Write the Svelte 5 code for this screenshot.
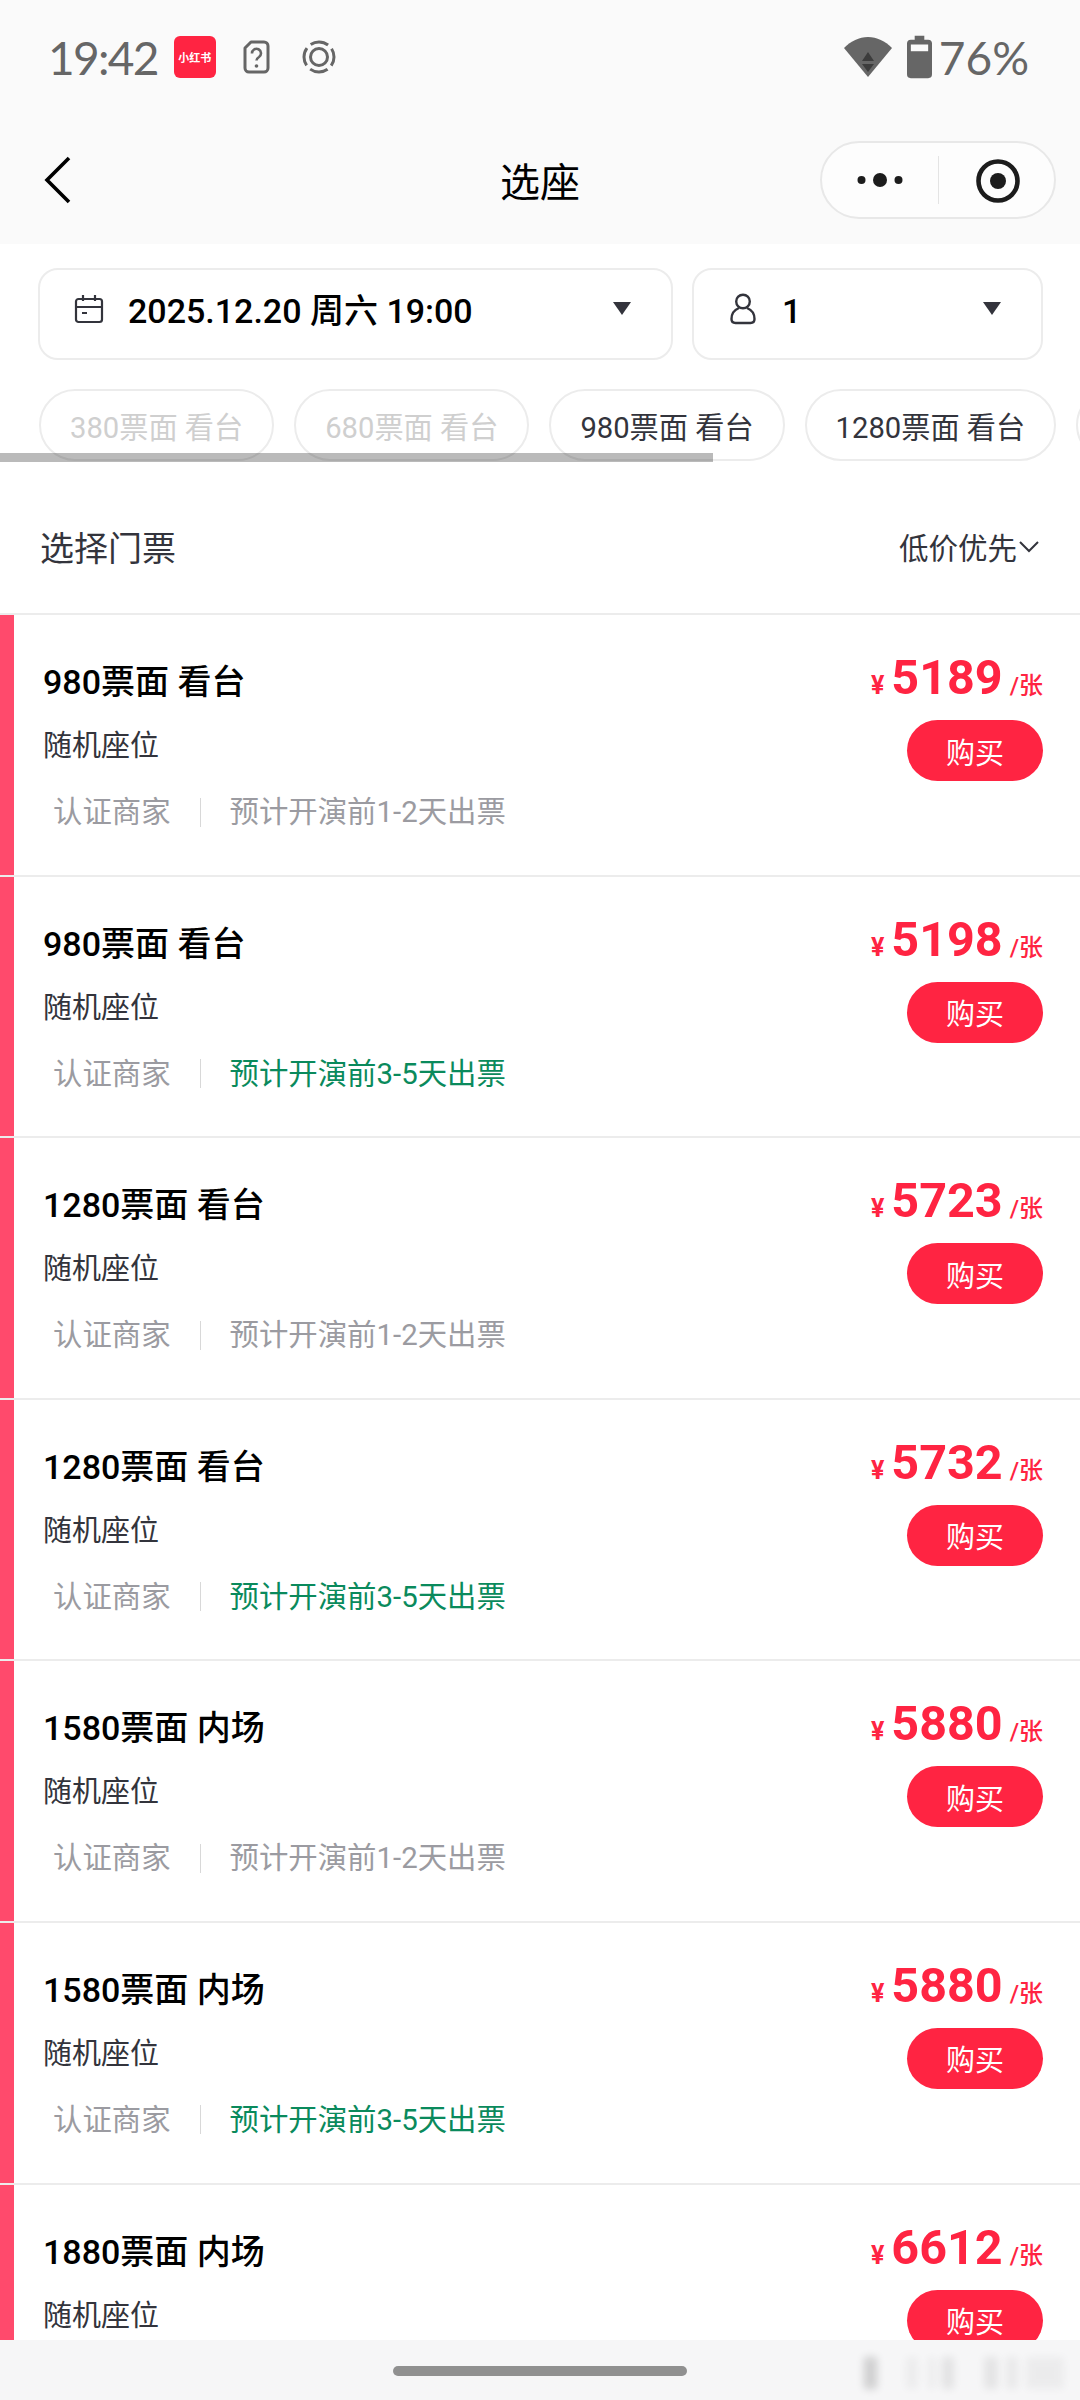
<script>
  const tickets = [
    { name: '980票面 看台', price: 5189, eta: '预计开演前1-2天出票', fast: false },
    { name: '980票面 看台', price: 5198, eta: '预计开演前3-5天出票', fast: true },
    { name: '1280票面 看台', price: 5723, eta: '预计开演前1-2天出票', fast: false },
    { name: '1280票面 看台', price: 5732, eta: '预计开演前3-5天出票', fast: true },
    { name: '1580票面 内场', price: 5880, eta: '预计开演前1-2天出票', fast: false },
    { name: '1580票面 内场', price: 5880, eta: '预计开演前3-5天出票', fast: true },
    { name: '1880票面 内场', price: 6612, eta: '预计开演前1-2天出票', fast: false }
  ];

  // the last chip only peeks in at the right edge, its label is off screen
  const chips = [
    { label: '380票面 看台', off: true },
    { label: '680票面 看台', off: true },
    { label: '980票面 看台', off: false },
    { label: '1280票面 看台', off: false },
    { label: '', off: false }
  ];

  // blurred smudge over the bottom right corner of the home bar
  const smudges = [
    { x: 864, w: 13, o: 0.16 },
    { x: 906, w: 12, o: 0.04 },
    { x: 928, w: 8, o: 0.04 },
    { x: 942, w: 12, o: 0.08 },
    { x: 984, w: 14, o: 0.07 },
    { x: 1006, w: 12, o: 0.05 },
    { x: 1026, w: 38, o: 0.04 }
  ];
</script>

<div class="page">
  <div class="status">
    <div class="status-left">
      <span class="clock">19:42</span>
      <span class="app-badge">小红书</span>
      <svg class="st-q" width="27" height="34" viewBox="0 0 27 34" fill="none" stroke="#666" stroke-width="3">
        <path d="M8 2h13a4 4 0 0 1 4 4v22a4 4 0 0 1-4 4H6a4 4 0 0 1-4-4V8z" stroke-linejoin="round"/>
        <path d="M9 13.500a4.500 4.500 0 1 1 7 3.500c-1.700 1-2.500 1.800-2.500 3.500" stroke-width="2.600"/>
        <circle cx="13.500" cy="26" r="1.800" fill="#666" stroke="none"/>
      </svg>
      <svg class="st-ring" width="34" height="34" viewBox="0 0 34 34" fill="none" stroke="#666">
        <circle cx="17" cy="17" r="8.500" stroke-width="3"/>
        <circle cx="17" cy="17" r="15" stroke-width="3" stroke-dasharray="18.500 5.060" stroke-dashoffset="9.250"/>
      </svg>
    </div>
    <div class="status-right">
      <svg class="st-wifi" width="48" height="42" viewBox="0 0 48 42">
        <path d="M0 12C7 5 15 1 24 1s17 4 24 11L24 41z" fill="#666"/>
        <path d="M24 16l6 9H18zM18 28h12l-6 8z" fill="#3c3c3c"/>
      </svg>
      <svg class="st-batt" width="25" height="44" viewBox="0 0 26 44">
        <path d="M8 0h10v4h4a4 4 0 0 1 4 4v32a4 4 0 0 1-4 4H4a4 4 0 0 1-4-4V8a4 4 0 0 1 4-4h4z" fill="#666"/>
        <rect x="4" y="9" width="18" height="7" fill="#fafafa"/>
      </svg>
      <span class="battery">76%</span>
    </div>
  </div>

  <div class="nav">
    <svg class="back" width="28" height="48" viewBox="0 0 28 48" fill="none" stroke="#000" stroke-width="3.600">
      <path d="M25 2L3 24l22 22"/>
    </svg>
    <span class="nav-title">选座</span>
    <div class="capsule">
      <div class="cap-half">
        <svg width="46" height="16" viewBox="0 0 46 16" fill="#1c1c1c">
          <circle cx="4.500" cy="8" r="4"/><circle cx="23" cy="8" r="7"/><circle cx="41.500" cy="8" r="4"/>
        </svg>
      </div>
      <div class="cap-line"></div>
      <div class="cap-half target">
        <svg width="44" height="44" viewBox="0 0 44 44">
          <circle cx="22" cy="22" r="19.500" fill="none" stroke="#1c1c1c" stroke-width="4.600"/>
          <circle cx="22" cy="22" r="8" fill="#1c1c1c"/>
        </svg>
      </div>
    </div>
  </div>

  <div class="filters">
    <div class="select date">
      <svg class="sel-icon" width="30" height="30" viewBox="0 0 30 30" fill="none" stroke="#33343c" stroke-width="2.200">
        <rect x="2" y="5" width="26" height="23" rx="2.500"/>
        <path d="M2 13h26M9 1v6M21 1v6M8 19h5"/>
      </svg>
      <span class="sel-text">2025.12.20 周六 19:00</span>
      <span class="caret"></span>
    </div>
    <div class="select count">
      <svg class="sel-icon" width="26" height="32" viewBox="0 0 26 32" fill="none" stroke="#33343c" stroke-width="2.400">
        <circle cx="13" cy="8.500" r="6.800"/>
        <path d="M9 15C4 17 1.500 21 1.500 26c0 2.500 1.500 4 4 4h15c2.500 0 4-1.500 4-4 0-5-2.500-9-7.500-11"/>
      </svg>
      <span class="sel-text">1</span>
      <span class="caret"></span>
    </div>
  </div>

  <div class="chips-wrap">
    <div class="chips">
      {#each chips as chip}
        <span class="chip" class:off={chip.off}>{chip.label}</span>
      {/each}
    </div>
    <div class="scrollbar"></div>
  </div>

  <div class="list-head">
    <span class="list-title">选择门票</span>
    <span class="sort">低价优先<svg width="22" height="14" viewBox="0 0 22 14" fill="none" stroke="#33343c" stroke-width="2"><path d="M2 3l9 9 9-9"/></svg></span>
  </div>

  <div class="list">
    {#each tickets as t}
      <div class="ticket">
        <div class="info">
          <div class="name">{t.name}</div>
          <div class="seat">随机座位</div>
          <div class="meta">
            <span class="seller">认证商家</span>
            <span class="sep"></span>
            <span class="eta" class:fast={t.fast}>{t.eta}</span>
          </div>
        </div>
        <div class="buy">
          <div class="price"><span class="yen">¥</span><span class="num">{t.price}</span><span class="unit">/张</span></div>
          <button class="buy-btn">购买</button>
        </div>
      </div>
    {/each}
  </div>

  <div class="home-bar">
    <span class="pill"></span>
    {#each smudges as s}
      <span class="smudge" style="left: {s.x}px; width: {s.w}px; opacity: {s.o}"></span>
    {/each}
  </div>
</div>

<style>
  :global(body) {
    margin: 0;
    background: #fff;
  }

  .page {
    width: 1080px;
    height: 2400px;
    overflow: hidden;
    position: relative;
    font-family: Roboto, "Noto Sans CJK SC", sans-serif;
    background: #fff;
  }

  .status {
    height: 118px;
    padding: 0 51px 4px 48px;
    box-sizing: border-box;
    background: #fafafa;
    display: flex;
    align-items: center;
    justify-content: space-between;
  }

  .status-left, .status-right {
    display: flex;
    align-items: center;
  }

  .clock, .battery {
    font-family: Lato, Roboto, sans-serif;
    font-size: 46px;
    color: #666;
  }

  .clock { letter-spacing: -1.700px; }

  .app-badge {
    width: 42px;
    height: 42px;
    margin-left: 16px;
    border-radius: 6px;
    background: #ff2442;
    color: #fff;
    font-size: 11px;
    font-weight: 700;
    display: flex;
    align-items: center;
    justify-content: center;
  }

  .st-q { margin-left: 27px; }
  .st-ring { margin-left: 32px; }
  .st-wifi { margin-right: 15px; }
  .st-batt { margin-right: 7px; }

  .nav {
    height: 126px;
    padding: 0 24px 3px 44px;
    box-sizing: border-box;
    background: #fafafa;
    display: flex;
    align-items: center;
    justify-content: space-between;
    position: relative;
  }

  .nav-title {
    position: absolute;
    left: 0;
    right: 0;
    text-align: center;
    font-size: 40px;
    color: #000;
  }

  .capsule {
    width: 236px;
    height: 78px;
    box-sizing: border-box;
    border: 2px solid #e8e8e8;
    border-radius: 39px;
    background: #fdfdfd;
    display: flex;
    align-items: center;
  }

  .cap-half {
    flex: 1;
    display: flex;
    justify-content: center;
    align-items: center;
  }

  .cap-half.target svg {
    margin: 2px 0 0 3px;
  }

  .cap-line {
    width: 1px;
    height: 48px;
    background: #e4e4e4;
  }

  .filters {
    display: flex;
    gap: 19px;
    padding: 24px 37px 0 38px;
  }

  .select {
    height: 92px;
    box-sizing: border-box;
    border: 2px solid #ececec;
    border-radius: 20px;
    display: flex;
    align-items: center;
    position: relative;
  }

  .date { width: 635px; padding-left: 34px; }
  .count { flex: 1; padding-left: 36px; }

  .sel-icon { margin-bottom: 11px; }

  .sel-text {
    font-size: 34px;
    font-weight: 500;
    color: #000;
    margin-left: 24px;
    margin-bottom: 6px;
  }

  .date .sel-text { margin-bottom: 11px; }
  .count .sel-text { margin-left: 26px; }

  .caret {
    position: absolute;
    right: 40px;
    top: 32px;
    width: 0;
    height: 0;
    border-left: 9px solid transparent;
    border-right: 9px solid transparent;
    border-top: 13px solid #33343c;
  }

  .chips-wrap {
    position: relative;
    margin-top: 29px;
    height: 73px;
    overflow: hidden;
  }

  .chips {
    display: flex;
    gap: 20px;
    padding-left: 39px;
    width: max-content;
  }

  .chip {
    height: 72px;
    min-width: 100px;
    box-sizing: border-box;
    padding: 0 29px;
    border: 2px solid #ececec;
    border-radius: 36px;
    font-size: 29.200px;
    color: #33343c;
    display: flex;
    align-items: center;
    white-space: nowrap;
  }

  .chip.off { color: #cfcfcf; }

  .scrollbar {
    position: absolute;
    left: 0;
    bottom: 0;
    width: 713px;
    height: 9px;
    background: rgba(0, 0, 0, 0.27);
  }

  .list-head {
    height: 131px;
    padding: 20px 40px 0;
    display: flex;
    align-items: center;
    justify-content: space-between;
    border-bottom: 2px solid #ececec;
  }

  .list-title {
    font-size: 34px;
    color: #33343c;
    margin-bottom: 2px;
  }

  .sort {
    font-size: 29.500px;
    color: #33343c;
    display: flex;
    align-items: center;
    gap: 1px;
    margin-bottom: 4px;
  }

  .ticket {
    height: 259.600px;
    border-bottom: 2px solid #ececec;
    display: flex;
    justify-content: space-between;
    padding: 0 37px 0 43px;
    position: relative;
    background: #fff;
  }

  .ticket::before {
    content: "";
    position: absolute;
    left: 0;
    top: 0;
    bottom: 0;
    width: 14px;
    background: #ff4a6c;
  }

  .info { padding-top: 45px; }

  .name {
    font-size: 34px;
    font-weight: 500;
    color: #000;
    line-height: 44px;
  }

  .seat {
    font-size: 29px;
    color: #33343c;
    line-height: 40px;
    margin-top: 22px;
  }

  .meta {
    display: flex;
    align-items: center;
    margin-top: 26px;
    padding-left: 10px;
    font-size: 29.400px;
    color: #9b9ba1;
    line-height: 40px;
  }

  .sep {
    width: 1px;
    height: 29px;
    background: #d8d8d8;
    margin: 0 29px;
  }

  .eta.fast { color: #0a8a5c; }

  .buy {
    display: flex;
    flex-direction: column;
    align-items: flex-end;
    padding-top: 35px;
  }

  .price {
    display: flex;
    align-items: baseline;
    color: #ff2442;
    line-height: 60px;
    height: 60px;
  }

  .yen { font-size: 25px; font-weight: 700; margin-right: 7px; }
  .num { font-size: 48.500px; font-weight: 700; margin-top: -2px; }
  .unit { font-size: 24px; font-weight: 500; margin-left: 7px; }

  .buy-btn {
    margin-top: 10px;
    width: 136px;
    height: 61px;
    border: none;
    border-radius: 31px;
    background: #ff2442;
    color: #fff;
    font-family: inherit;
    font-size: 29px;
    padding: 0;
  }

  .home-bar {
    position: absolute;
    left: 0;
    right: 0;
    bottom: 0;
    height: 60px;
    background: #f6f6f7;
    display: flex;
    justify-content: center;
    padding-top: 26px;
    box-sizing: border-box;
  }

  .pill {
    width: 294px;
    height: 10px;
    border-radius: 5px;
    background: #909090;
  }

  .smudge {
    position: absolute;
    top: 17px;
    height: 32px;
    background: #000;
    filter: blur(4px);
  }
</style>
